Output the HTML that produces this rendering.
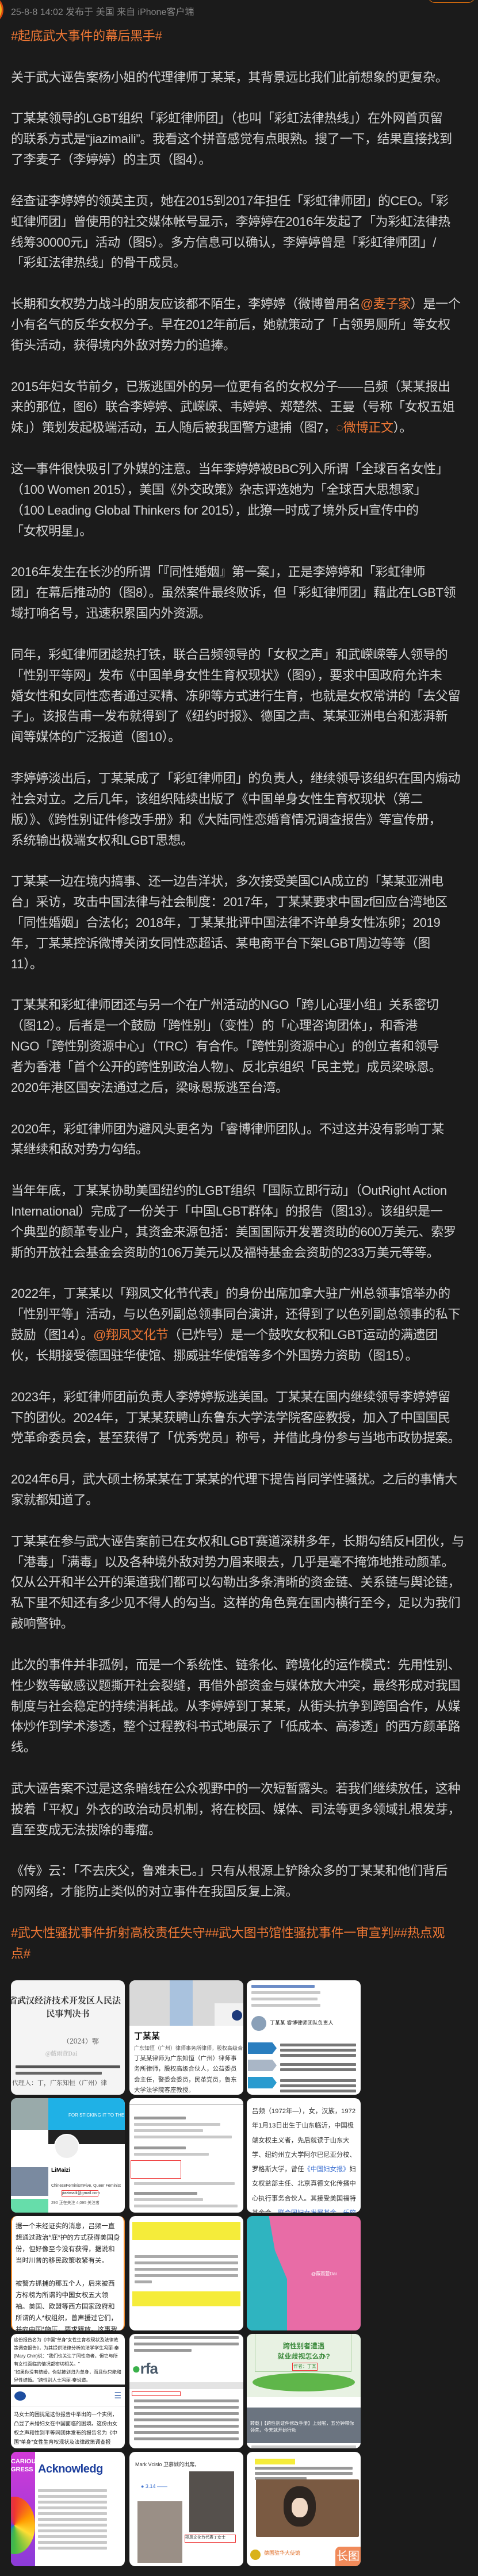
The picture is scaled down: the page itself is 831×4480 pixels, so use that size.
<!DOCTYPE html>
<html><head><meta charset="utf-8">
<style>
*{margin:0;padding:0;box-sizing:border-box}
html,body{width:831px;height:4480px;background:#1b1b1b;overflow:hidden}
body{position:relative;font-family:"Liberation Sans","Noto Sans CJK SC",sans-serif;color:#d4d4d4}
.ts{position:absolute;left:19px;top:11px;font-size:16px;color:#868686;white-space:nowrap;line-height:22px}
.av{position:absolute;left:-34px;top:-6px;width:40px;height:46px;border-radius:50%;background:#f2b21b;border:3px solid #d9480f}
.btn{position:absolute;left:744px;top:-20px;width:82px;height:25px;border:1.5px solid #e8730c;border-radius:12px}
.txt{position:absolute;left:19px;top:45px;width:812px;font-size:22px;line-height:35.87px;white-space:nowrap;overflow:hidden;letter-spacing:-0.3px}
.txt div{height:35.87px}
.o{color:#f07835}
.grid{position:absolute;left:0;top:0}
.c{position:absolute;width:198px;height:199px;border-radius:10px;overflow:hidden;background:#fff;color:#333;font-size:10px;line-height:1.5}
.ln{height:5px;background:#c9c9c9;margin:6px 8px;border-radius:1px}
.dk{background:#777}
</style></head><body>
<div class="av"></div>
<div class="btn"></div>
<div class="ts">25-8-8 14:02 发布于 美国 来自 iPhone客户端</div>
<div class="txt">
<div class="o">#起底武大事件的幕后黑手#</div>
<div></div>
<div>关于武大诬告案杨小姐的代理律师丁某某，其背景远比我们此前想象的更复杂。</div>
<div></div>
<div>丁某某领导的LGBT组织「彩虹律师团」（也叫「彩虹法律热线」）在外网首页留</div>
<div>的联系方式是“jiazimaili”。我看这个拼音感觉有点眼熟。搜了一下，结果直接找到</div>
<div>了李麦子（李婷婷）的主页（图4）。</div>
<div></div>
<div>经查证李婷婷的领英主页，她在2015到2017年担任「彩虹律师团」的CEO。「彩</div>
<div>虹律师团」曾使用的社交媒体帐号显示，李婷婷在2016年发起了「为彩虹法律热</div>
<div>线筹30000元」活动（图5）。多方信息可以确认，李婷婷曾是「彩虹律师团」/</div>
<div>「彩虹法律热线」的骨干成员。</div>
<div></div>
<div>长期和女权势力战斗的朋友应该都不陌生，李婷婷（微博曾用名<span class="o">@麦子家</span>）是一个</div>
<div>小有名气的反华女权分子。早在2012年前后，她就策动了「占领男厕所」等女权</div>
<div>街头活动，获得境内外敌对势力的追捧。</div>
<div></div>
<div>2015年妇女节前夕，已叛逃国外的另一位更有名的女权分子——吕频（某某报出</div>
<div>来的那位，图6）联合李婷婷、武嵘嵘、韦婷婷、郑楚然、王曼（号称「女权五姐</div>
<div>妹」）策划发起极端活动，五人随后被我国警方逮捕（图7，<span class="o">◌微博正文</span>）。</div>
<div></div>
<div>这一事件很快吸引了外媒的注意。当年李婷婷被BBC列入所谓「全球百名女性」</div>
<div>（100 Women 2015），美国《外交政策》杂志评选她为「全球百大思想家」</div>
<div>（100 Leading Global Thinkers for 2015），此獠一时成了境外反H宣传中的</div>
<div>「女权明星」。</div>
<div></div>
<div>2016年发生在长沙的所谓「『同性婚姻』第一案」，正是李婷婷和「彩虹律师</div>
<div>团」在幕后推动的（图8）。虽然案件最终败诉，但「彩虹律师团」藉此在LGBT领</div>
<div>域打响名号，迅速积累国内外资源。</div>
<div></div>
<div>同年，彩虹律师团趁热打铁，联合吕频领导的「女权之声」和武嵘嵘等人领导的</div>
<div>「性别平等网」发布《中国单身女性生育权现状》（图9），要求中国政府允许未</div>
<div>婚女性和女同性恋者通过买精、冻卵等方式进行生育，也就是女权常讲的「去父留</div>
<div>子」。该报告甫一发布就得到了《纽约时报》、德国之声、某某亚洲电台和澎湃新</div>
<div>闻等媒体的广泛报道（图10）。</div>
<div></div>
<div>李婷婷淡出后，丁某某成了「彩虹律师团」的负责人，继续领导该组织在国内煽动</div>
<div>社会对立。之后几年，该组织陆续出版了《中国单身女性生育权现状（第二</div>
<div>版）》、《跨性别证件修改手册》和《大陆同性恋婚育情况调查报告》等宣传册，</div>
<div>系统输出极端女权和LGBT思想。</div>
<div></div>
<div>丁某某一边在境内搞事、还一边告洋状，多次接受美国CIA成立的「某某亚洲电</div>
<div>台」采访，攻击中国法律与社会制度：2017年，丁某某要求中国zf回应台湾地区</div>
<div>「同性婚姻」合法化；2018年，丁某某批评中国法律不许单身女性冻卵；2019</div>
<div>年，丁某某控诉微博关闭女同性恋超话、某电商平台下架LGBT周边等等（图</div>
<div>11）。</div>
<div></div>
<div>丁某某和彩虹律师团还与另一个在广州活动的NGO「跨儿心理小组」关系密切</div>
<div>（图12）。后者是一个鼓励「跨性别」（变性）的「心理咨询团体」，和香港</div>
<div>NGO「跨性别资源中心」（TRC）有合作。「跨性别资源中心」的创立者和领导</div>
<div>者为香港「首个公开的跨性别政治人物」、反北京组织「民主党」成员梁咏恩。</div>
<div>2020年港区国安法通过之后，梁咏恩叛逃至台湾。</div>
<div></div>
<div>2020年，彩虹律师团为避风头更名为「睿博律师团队」。不过这并没有影响丁某</div>
<div>某继续和敌对势力勾结。</div>
<div></div>
<div>当年年底，丁某某协助美国纽约的LGBT组织「国际立即行动」（OutRight Action</div>
<div>International）完成了一份关于「中国LGBT群体」的报告（图13）。该组织是一</div>
<div>个典型的颜革专业户，其资金来源包括：美国国际开发署资助的600万美元、索罗</div>
<div>斯的开放社会基金会资助的106万美元以及福特基金会资助的233万美元等等。</div>
<div></div>
<div>2022年，丁某某以「翔凤文化节代表」的身份出席加拿大驻广州总领事馆举办的</div>
<div>「性别平等」活动，与以色列副总领事同台演讲，还得到了以色列副总领事的私下</div>
<div>鼓励（图14）。<span class="o">@翔凤文化节</span>（已炸号）是一个鼓吹女权和LGBT运动的满遗团</div>
<div>伙，长期接受德国驻华使馆、挪威驻华使馆等多个外国势力资助（图15）。</div>
<div></div>
<div>2023年，彩虹律师团前负责人李婷婷叛逃美国。丁某某在国内继续领导李婷婷留</div>
<div>下的团伙。2024年，丁某某获聘山东鲁东大学法学院客座教授，加入了中国国民</div>
<div>党革命委员会，甚至获得了「优秀党员」称号，并借此身份参与当地市政协提案。</div>
<div></div>
<div>2024年6月，武大硕士杨某某在丁某某的代理下提告肖同学性骚扰。之后的事情大</div>
<div>家就都知道了。</div>
<div></div>
<div>丁某某在参与武大诬告案前已在女权和LGBT赛道深耕多年，长期勾结反H团伙，与</div>
<div>「港毒」「满毒」以及各种境外敌对势力眉来眼去，几乎是毫不掩饰地推动颜革。</div>
<div>仅从公开和半公开的渠道我们都可以勾勒出多条清晰的资金链、关系链与舆论链，</div>
<div>私下里不知还有多少见不得人的勾当。这样的角色竟在国内横行至今，足以为我们</div>
<div>敲响警钟。</div>
<div></div>
<div>此次的事件并非孤例，而是一个系统性、链条化、跨境化的运作模式：先用性别、</div>
<div>性少数等敏感议题撕开社会裂缝，再借外部资金与媒体放大冲突，最终形成对我国</div>
<div>制度与社会稳定的持续消耗战。从李婷婷到丁某某，从街头抗争到跨国合作，从媒</div>
<div>体炒作到学术渗透，整个过程教科书式地展示了「低成本、高渗透」的西方颜革路</div>
<div>线。</div>
<div></div>
<div>武大诬告案不过是这条暗线在公众视野中的一次短暂露头。若我们继续放任，这种</div>
<div>披着「平权」外衣的政治动员机制，将在校园、媒体、司法等更多领域扎根发芽，</div>
<div>直至变成无法拔除的毒瘤。</div>
<div></div>
<div>《传》云：「不去庆父，鲁难未已。」只有从根源上铲除众多的丁某某和他们背后</div>
<div>的网络，才能防止类似的对立事件在我国反复上演。</div>
<div></div>
<div class="o">#武大性骚扰事件折射高校责任失守##武大图书馆性骚扰事件一审宣判##热点观</div>
<div class="o">点#</div>
</div>

<!-- Row 1 -->
<div class="c" style="left:19px;top:3444px;background:#f4f4f4;font-family:'Noto Serif CJK SC',serif">
  <div style="font-size:15px;font-weight:bold;white-space:nowrap;margin:24px 0 0 -4px;color:#333">省武汉经济技术开发区人民法</div>
  <div style="font-size:15px;font-weight:bold;text-align:center;color:#333">民事判决书</div>
  <div style="font-size:12px;margin:28px 0 0 90px;color:#444">（2024）鄂</div>
  <div style="font-size:10px;margin:4px 0 0 60px;color:#aaa">@薇雨萱Dai</div>
  <div class="ln dk" style="margin-top:14px;background:#555"></div>
  <div class="ln dk" style="background:#666;width:150px"></div>
  <div style="font-size:11px;margin:6px 0 0 2px;white-space:nowrap;color:#444">代理人：丁，广东知恒（广州）律</div>
</div>
<div class="c" style="left:225px;top:3444px">
  <div style="height:79px;background:#d9d9d9;position:relative">
    <div style="position:absolute;left:70px;top:0;width:40px;height:79px;background:#a9c2de"></div>
    <div style="position:absolute;right:0;top:40px;width:50px;height:39px;background:#f2f2f2"></div>
    <div style="position:absolute;right:2px;top:52px;width:18px;height:18px;border-radius:50%;background:#1d3a7a"></div>
  </div>
  <div style="font-size:15px;font-weight:bold;margin:8px 0 0 8px;color:#111">丁某某</div>
  <div style="font-size:9px;margin:2px 8px;color:#555;white-space:nowrap">广东知恒（广州）律师事务所律师，股权高级合...</div>
  <div style="font-size:10.5px;margin:2px 8px;color:#333;line-height:1.75">丁某某律师为广东知恒（广州）律师事务所律师，股权高级合伙人，公益委员会主任，警委会委员，民革党员，鲁东大学法学院客座教授。</div>
</div>
<div class="c" style="left:429px;top:3444px">
  <div class="ln" style="margin-top:8px;width:110px;background:#6b8cc7"></div>
  <div class="ln" style="width:120px"></div>
  <div class="ln" style="width:115px"></div>
  <div class="ln" style="width:120px"></div>
  <div style="display:flex;align-items:center;margin:16px 0 0 8px"><div style="width:26px;height:26px;border-radius:50%;background:#8aa0b8"></div><div style="font-size:9px;margin-left:6px;color:#222">丁某某 睿博律师团队负责人</div></div>
  <div style="position:absolute;left:2px;top:108px;width:50px;height:20px;background:#2a7ebf;clip-path:polygon(0 0,85% 0,100% 50%,85% 100%,0 100%)"></div>
  <div style="position:absolute;left:2px;top:138px;width:50px;height:20px;background:#a9b6c6;clip-path:polygon(0 0,85% 0,100% 50%,85% 100%,0 100%)"></div>
  <div style="position:absolute;left:2px;top:168px;width:50px;height:20px;background:#2a9bcf;clip-path:polygon(0 0,85% 0,100% 50%,85% 100%,0 100%)"></div>
  <div style="position:absolute;left:58px;top:106px;width:132px"><div class="ln dk" style="margin:4px 0"></div><div class="ln dk" style="margin:4px 0"></div><div class="ln dk" style="margin:4px 0"></div></div>
  <div style="position:absolute;left:58px;top:140px;width:132px"><div class="ln dk" style="margin:4px 0"></div><div class="ln dk" style="margin:4px 0"></div></div>
  <div style="position:absolute;left:58px;top:168px;width:132px"><div class="ln dk" style="margin:4px 0"></div><div class="ln dk" style="margin:4px 0"></div><div class="ln dk" style="margin:4px 0"></div></div>
</div>

<!-- Row 2 -->
<div class="c" style="left:19px;top:3649px">
  <div style="position:absolute;left:65px;top:0;width:133px;height:55px;background:#1fb1e6;color:#fff;font-size:8px;padding:24px 0 0 35px;white-space:nowrap">FOR STICKING IT TO THE COM</div>
  <div style="position:absolute;left:0;top:0;width:65px;height:55px;background:#9aa"></div>
  <div style="position:absolute;left:65px;top:55px;width:133px;height:25px;background:#222"></div>
  <div style="position:absolute;left:75px;top:62px;width:44px;height:44px;border-radius:50%;background:#eee;border:2px solid #fff"></div>
  <div style="position:absolute;left:0;top:175px;width:65px;height:24px;background:#6da"></div>
  <div style="position:absolute;left:0;top:120px;width:65px;height:50px;background:#7a8aa0"></div>
  <div style="position:absolute;left:70px;top:118px;font-size:10px;font-weight:bold;color:#111">LiMaizi</div>
  <div style="position:absolute;left:70px;top:148px;font-size:7px;color:#333;white-space:nowrap">ChineseFeminismFive, Queer Feminist</div>
  <div style="position:absolute;left:88px;top:160px;width:64px;height:11px;border:1.5px solid #e33;font-size:7px">jiazimaili@gmail.com</div>
  <div style="position:absolute;left:70px;top:178px;font-size:7px;color:#555">290 正在关注  4,095 关注者</div>
</div>
<div class="c" style="left:225px;top:3649px">
  <div style="height:12px;border-bottom:2px solid #ccc"></div>
  <div class="ln" style="width:90px;margin-top:20px;background:#999"></div>
  <div class="ln" style="width:150px"></div><div class="ln" style="width:120px"></div>
  <div class="ln" style="width:170px"></div>
  <div class="ln" style="width:90px;margin-top:14px;background:#999"></div>
  <div class="ln" style="width:130px"></div>
  <div style="margin:8px 0 0 2px;width:88px;height:32px;border:1.5px solid #e33"></div>
  <div class="ln" style="width:175px"></div>
  <div class="ln" style="width:110px;margin-top:12px;background:#999"></div>
  <div class="ln" style="width:120px"></div><div class="ln" style="width:180px"></div>
</div>
<div class="c" style="left:429px;top:3649px;padding:11px 8px 0 9px;font-size:11.3px;line-height:25.3px;color:#333">
  吕频（1972年—），女，汉族，1972年1月13日出生于山东临沂，中国极端女权主义者，先后就读于山东大学、纽约州立大学阿尔巴尼亚分校、罗格斯大学，曾任<span style="color:#3b6fd1">《中国妇女报》</span>妇女权益部主任、北京真德文化传播中心执行事务合伙人。其接受美国福特基金会、<span style="color:#3b6fd1">联合国妇女发展基金、乐施会</span>等境外NGO组织资助，在中国多次煽动开展极端女权活动，泡制大量关于我国妇女群体不实报道，2015年前往美国并滞留，长期在境外媒体攻击、抹黑中国。
</div>

<!-- Row 3 -->
<div class="c" style="left:19px;top:3854px;border-left:2px solid #f08a2a;border-right:2px solid #f08a2a;padding:8px 5px 0 6px;font-size:11.5px;line-height:20px;color:#222">
  据一个未经证实的消息，吕频一直想通过政治*庇*护的方式获得美国身份，但好像至今没有获得，据说和当时川普的移民政策收紧有关。<br><br>被警方抓捕的那五个人，后来被西方标榜为所谓的中国女权五大领袖。美国、欧盟等西方国家政府和所谓的人*权组织，曾声援过它们，并向中国*施压，要求释放。这事我前面的帖子里说过，不再赘述。
</div>
<div class="c" style="left:225px;top:3854px;padding:6px 5px">
  <div style="background:#f5ec3a;height:32px;margin:4px 0"></div>
  <div class="ln" style="margin:26px 4px 6px;background:#aaa"></div><div class="ln" style="margin:6px 4px;background:#aaa"></div><div class="ln" style="margin:6px 4px;background:#aaa"></div><div class="ln" style="margin:6px 4px;background:#aaa"></div><div class="ln" style="margin:6px 4px;width:30px;background:#aaa"></div>
  <div style="background:#f5ec3a;height:26px;margin:14px 0 0"></div>
</div>
<div class="c" style="left:429px;top:3854px;background:#e86ca6">
  <div style="position:absolute;left:0;top:0;width:70px;height:199px;background:#2fb4c0;clip-path:polygon(0 0,55% 0,70% 30%,100% 55%,100% 100%,0 100%)"></div>
  <div style="position:absolute;left:112px;top:95px;font-size:8px;color:#fff">@薇雨萱Dai</div>
</div>

<!-- Row 4 -->
<div class="c" style="left:19px;top:4059px;font-size:8px;color:#222;line-height:14px">
  <div style="padding:4px 5px 0;height:88px">这份报告名为《中国"单身"女性生育权现状及法律政策调查报告》，为其提供法律分析的法学学生冯丽·秦(Mary Chin)说："我们也关注了同性恋者，但它与所有女性面临的情况都密切相关。"<br>"如果你没有结婚，你就被划归为单身，而且你只能和异性结婚。"跨性别人士冯丽·秦说道。</div>
  <div style="height:4px;background:#222"></div>
  <div style="height:34px;border-bottom:1px solid #ddd;position:relative"><div style="position:absolute;left:6px;top:8px;width:20px;height:16px;border-radius:50%;background:#1e4ea0"></div><div style="position:absolute;right:6px;top:8px;font-size:14px;color:#1e4ea0">☰</div></div>
  <div style="padding:6px 5px 0;font-size:9px;line-height:16px">马女士的困扰是这份报告中举出的一个实例，凸显了未婚妇女在中国面临的困境。这份由女权之声和性别平等网团体发布的报告名为《中国"单身"女性生育权现状及法律政策调查报告》。</div>
</div>
<div class="c" style="left:225px;top:4059px">
  <div class="ln" style="margin-top:4px;background:#999"></div><div class="ln" style="background:#999"></div><div class="ln" style="width:100px;background:#999"></div>
  <div style="margin:10px 0 0 4px;font-size:26px;font-weight:bold;color:#4a5a6a;letter-spacing:-1px"><span style="color:#3ab04a">●</span>rfa</div>
  <div style="height:12px;background:#e3e3e3;margin:4px 0"></div>
  <div style="margin:2px 4px;height:8px;border:1.5px solid #e33;width:85px"></div>
  <div class="ln" style="background:#999"></div><div class="ln" style="background:#999"></div><div class="ln" style="background:#999"></div><div class="ln" style="background:#999"></div><div class="ln" style="background:#999"></div><div class="ln" style="background:#999"></div><div class="ln" style="background:#999"></div>
</div>
<div class="c" style="left:429px;top:4059px;background:#fff">
  <div style="height:110px;background:#e8f2e3;position:relative">
    <div style="position:absolute;left:14px;top:0;width:168px;height:66px;border:1px solid #aad0a0;border-top:none"></div>
    <div style="position:absolute;left:0;right:0;top:12px;text-align:center;font-size:12px;font-weight:bold;color:#3c8a3c;line-height:18px">跨性别者遭遇<br>就业歧视怎么办?</div>
    <div style="position:absolute;left:79px;top:50px;width:44px;height:14px;border:1.5px solid #e33;font-size:8px;color:#3c8a3c;text-align:center">作者：丁某</div>
    <div style="position:absolute;left:10px;top:68px;width:178px;height:32px;border-radius:50%;background:#5fb64a"></div>
  </div>
  <div style="height:18px;background:#fff"></div>
  <div style="height:62px;background:#6b7480;color:#fff;font-size:8px;padding:22px 6px 0">转载 |【跨性别证件修改手册】上线啦，五分钟带你领先，今天就开始行动</div>
  <div class="ln" style="margin-top:4px"></div>
</div>

<!-- Row 5 -->
<div class="c" style="left:19px;top:4264px">
  <div style="position:absolute;left:0;top:0;width:42px;height:199px;background:linear-gradient(180deg,#d23ad8,#8b3bd8)"></div>
  <div style="position:absolute;left:-30px;top:78px;width:72px;height:100px;border-radius:50%;background:conic-gradient(#e33,#f90,#fd3,#4b4,#27c,#83c,#e33);clip-path:inset(0 0 0 30px)"></div>
  <div style="position:absolute;left:0;top:10px;font-size:11px;font-weight:bold;color:#fff;line-height:14px">CARIOUS<br>GRESS</div>
  <div style="position:absolute;left:47px;top:15px;font-size:20px;font-weight:bold;color:#1c3e9c;white-space:nowrap;letter-spacing:-0.5px">Acknowledg</div>
  <div style="position:absolute;left:47px;top:60px;width:120px"><div class="ln" style="margin:5px 0"></div><div class="ln" style="margin:5px 0"></div><div class="ln" style="margin:5px 0"></div><div class="ln" style="margin:5px 0"></div><div class="ln" style="margin:5px 0"></div><div class="ln" style="margin:5px 0"></div><div class="ln" style="margin:5px 0"></div><div class="ln" style="margin:5px 0"></div><div class="ln" style="margin:5px 0"></div><div class="ln" style="margin:5px 0"></div><div class="ln" style="margin:5px 0"></div></div>
</div>
<div class="c" style="left:225px;top:4264px">
  <div style="font-size:9px;margin:16px 0 0 10px;color:#333">Mark Vcislo 卫慕诚的出席。</div>
  <div style="position:absolute;left:20px;top:54px;font-size:9px;color:#3a6fd0">● 3.14 ——</div>
  <div style="position:absolute;left:104px;top:34px;width:78px;height:106px;background:#55504c"></div>
  <div style="position:absolute;left:14px;top:86px;width:78px;height:107px;background:#9a8f86"></div>
  <div style="position:absolute;left:96px;top:144px;width:89px;height:14px;border:1.5px solid #e33;font-size:7px;white-space:nowrap">翔凤文化节代表丁女士</div>
</div>
<div class="c" style="left:429px;top:4264px">
  <div style="margin:12px 0 0 14px;width:70px;height:10px;background:#f5ec3a"></div>
  <div class="ln" style="margin:4px 14px;background:#999"></div><div class="ln" style="margin:4px 14px;background:#999"></div><div class="ln" style="margin:4px 14px;width:90px;background:#999"></div>
  <div style="position:absolute;left:16px;top:48px;width:179px;height:100px;background:#7a5a42;border-radius:2px"></div>
  <div style="position:absolute;left:64px;top:60px;width:56px;height:70px;border-radius:45%;background:#2d2520"></div>
  <div style="position:absolute;left:78px;top:80px;width:28px;height:34px;border-radius:45%;background:#f0d8c4"></div>
  <div style="position:absolute;left:6px;top:170px;width:18px;height:18px;border-radius:50%;background:#d9b21a"></div>
  <div style="position:absolute;left:30px;top:170px;font-size:9px;color:#e0702a">德国驻华大使馆</div>
  <div style="position:absolute;right:0;bottom:0;width:44px;height:34px;background:#f08a5a;color:#fff;font-size:20px;text-align:center;line-height:34px;border-top-left-radius:8px">长图</div>
</div>
</body></html>
